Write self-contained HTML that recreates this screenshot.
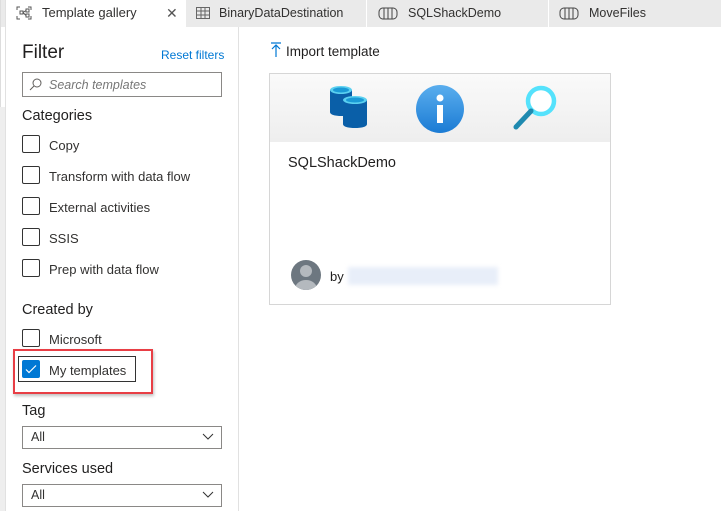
<!DOCTYPE html>
<html><head><meta charset="utf-8"><style>
*{box-sizing:border-box;margin:0;padding:0}
body{width:721px;height:511px;overflow:hidden;background:#fff;font-family:"Liberation Sans",sans-serif;color:#323130;position:relative;font-size:13px}
.abs{position:absolute;white-space:nowrap}
.tabs{left:0;top:0;width:721px;height:27px;background:#eaeaea}
.tab{top:0;height:27px;line-height:26px;font-size:12.5px;color:#323130}
.cb{position:absolute;left:22px;width:18px;height:18px;border:1px solid #333;border-radius:2px;background:#fff}
.lbl{position:absolute;left:49px;font-size:13px;color:#323130;white-space:nowrap}
.h{position:absolute;left:22px;font-size:14.5px;color:#201f1f}
.sel{position:absolute;left:22px;width:200px;height:23px;border:1px solid #8a8886;font-size:12.5px;line-height:21px;padding-left:8px}
.sel svg{position:absolute;right:7px;top:6px}
</style></head><body>
<div class="abs tabs"></div>
<div class="abs" style="left:5px;top:0;width:181px;height:28px;background:#fff"></div>
<div class="abs" style="left:0;top:0;width:1px;height:511px;background:#ddd"></div>
<div class="abs" style="left:0;top:107px;width:5px;height:404px;background:#eee"></div>
<div class="abs" style="left:5px;top:0;width:1px;height:511px;background:#e1e1e1"></div>
<svg class="abs" style="left:16px;top:6px" width="16" height="14" viewBox="0 0 16 14" fill="none" stroke="#555" stroke-width="1"><path d="M1 4V1h3M12 1h3v3M15 10v3h-3M4 13H1v-3"/><rect x="4" y="5" width="3" height="3"/><rect x="10" y="3" width="3" height="3"/><rect x="10" y="8" width="3" height="3"/><path d="M7 6.5l3-2M7 6.5l3 3"/></svg>
<div class="abs tab" style="left:42px;font-size:13px">Template gallery</div>
<div class="abs tab" style="left:166px;font-size:14px;color:#555">✕</div>
<svg class="abs" style="left:196px;top:7px" width="14" height="12" viewBox="0 0 14 12" fill="none" stroke="#666"><rect x=".5" y=".5" width="13" height="11"/><path d="M.5 4h13M.5 8h13M5 .5v11M9 .5v11"/></svg>
<div class="abs tab" style="left:219px">BinaryDataDestination</div>
<div class="abs" style="left:366px;top:0;width:1px;height:27px;background:#fff"></div>
<div class="abs" style="left:548px;top:0;width:1px;height:27px;background:#fff"></div>
<svg class="abs" style="left:378px;top:7px" width="20" height="13" viewBox="0 0 20 13" fill="none" stroke="#444"><rect x="1" y="1" width="18" height="11" rx="4"/><path d="M6 1v11M10 1v11M14 1v11"/></svg>
<div class="abs tab" style="left:408px">SQLShackDemo</div>
<svg class="abs" style="left:559px;top:7px" width="20" height="13" viewBox="0 0 20 13" fill="none" stroke="#444"><rect x="1" y="1" width="18" height="11" rx="4"/><path d="M6 1v11M10 1v11M14 1v11"/></svg>
<div class="abs tab" style="left:589px">MoveFiles</div>

<div class="abs" style="left:238px;top:27px;width:1px;height:484px;background:#e1e1e1"></div>
<div class="abs" style="left:22px;top:42px;font-size:19px;color:#201f1f">Filter</div>
<div class="abs" style="left:161px;top:48px;font-size:12px;color:#0078d4">Reset filters</div>
<div class="abs" style="left:22px;top:72px;width:200px;height:25px;border:1px solid #8a8886"></div>
<svg class="abs" style="left:29px;top:78px" width="13" height="13" viewBox="0 0 13 13" fill="none" stroke="#605e5c"><circle cx="8" cy="5" r="4"/><path d="M5 8L1 12"/></svg>
<div class="abs" style="left:49px;top:78px;font-size:12.5px;font-style:italic;color:#777">Search templates</div>
<div class="h" style="top:108px">Categories</div>
<div class="cb" style="top:135px"></div><div class="lbl" style="top:138px">Copy</div>
<div class="cb" style="top:166px"></div><div class="lbl" style="top:169px">Transform with data flow</div>
<div class="cb" style="top:197px"></div><div class="lbl" style="top:200px">External activities</div>
<div class="cb" style="top:228px"></div><div class="lbl" style="top:231px">SSIS</div>
<div class="cb" style="top:259px"></div><div class="lbl" style="top:262px">Prep with data flow</div>
<div class="h" style="top:302px">Created by</div>
<div class="cb" style="top:329px"></div><div class="lbl" style="top:332px">Microsoft</div>
<div class="abs" style="left:13px;top:349px;width:140px;height:45px;border:2px solid #e83e45;box-shadow:1px 2px 3px rgba(0,0,0,.25)"></div>
<div class="abs" style="left:18px;top:356px;width:118px;height:26px;border:1px solid #333"></div>
<div class="cb" style="top:360px;border-color:#0078d4;background:#0078d4"><svg width="16" height="16" viewBox="0 0 16 16" fill="none" stroke="#fff" stroke-width="1.2"><path d="M3 8.5l3 3 7-7"/></svg></div>
<div class="lbl" style="top:363px">My templates</div>
<div class="h" style="top:403px">Tag</div>
<div class="sel" style="top:426px">All<svg width="12" height="8" viewBox="0 0 12 8" fill="none" stroke="#333"><path d="M1 1l5 5 5-5"/></svg></div>
<div class="h" style="top:461px">Services used</div>
<div class="sel" style="top:484px">All<svg width="12" height="8" viewBox="0 0 12 8" fill="none" stroke="#333"><path d="M1 1l5 5 5-5"/></svg></div>

<svg class="abs" style="left:270px;top:42px" width="12" height="16" viewBox="0 0 12 16" fill="none" stroke="#0078d4" stroke-width="1.2"><path d="M1 1h10M6 3v12M2 7l4-4 4 4"/></svg>
<div class="abs" style="left:286px;top:44px;font-size:13.5px;color:#201f1f">Import template</div>

<div class="abs" style="left:269px;top:73px;width:342px;height:232px;border:1px solid #d6d6d6"></div>
<div class="abs" style="left:270px;top:74px;width:340px;height:68px;background:linear-gradient(#fafafa,#eeeeee)"></div>
<svg class="abs" style="left:328px;top:84px" width="42" height="48" viewBox="0 0 42 48">
<path d="M2 6v22c0 3 6 4 11 4s11-1 11-4V6z" fill="#0a5fa8"/><ellipse cx="13" cy="6" rx="11" ry="4" fill="#5ad0f0"/><ellipse cx="13" cy="6" rx="8" ry="2.5" fill="#1a9ad6"/>
<path d="M15 16v24c0 3 6 4 12 4s12-1 12-4V16z" fill="#0a5fa8"/><ellipse cx="27" cy="16" rx="12" ry="4" fill="#5ad0f0"/><ellipse cx="27" cy="16" rx="9" ry="2.5" fill="#1a9ad6"/></svg>
<svg class="abs" style="left:415px;top:84px" width="50" height="50" viewBox="0 0 50 50"><defs><linearGradient id="g" x1="0" y1="0" x2="0" y2="1"><stop offset="0" stop-color="#5aaeee"/><stop offset="1" stop-color="#1b7bd4"/></linearGradient></defs><circle cx="25" cy="25" r="24" fill="url(#g)"/><circle cx="25" cy="14" r="3.5" fill="#fff"/><rect x="22" y="21" width="6" height="18" fill="#fff"/></svg>
<svg class="abs" style="left:511px;top:83px" width="48" height="50" viewBox="0 0 48 50"><circle cx="30" cy="18" r="13" fill="#fff" stroke="#55e2fc" stroke-width="4.5"/><path d="M20 28L5 44" stroke="#1f8ab0" stroke-width="5" stroke-linecap="round"/></svg>
<div class="abs" style="left:288px;top:155px;font-size:14.5px;color:#201f1f">SQLShackDemo</div>
<svg class="abs" style="left:290px;top:259px" width="32" height="32" viewBox="0 0 32 32"><circle cx="16" cy="16" r="15" fill="#6d7780"/><clipPath id="c"><circle cx="16" cy="16" r="15"/></clipPath><g clip-path="url(#c)" fill="#b4b9be"><circle cx="16" cy="12" r="6"/><ellipse cx="16" cy="30" rx="11" ry="9"/></g></svg>
<div class="abs" style="left:330px;top:269px;font-size:13px;color:#201f1f">by</div>
<div class="abs" style="left:348px;top:267px;width:150px;height:18px;background:#e8eef9;filter:blur(2px)"></div>
</body></html>
